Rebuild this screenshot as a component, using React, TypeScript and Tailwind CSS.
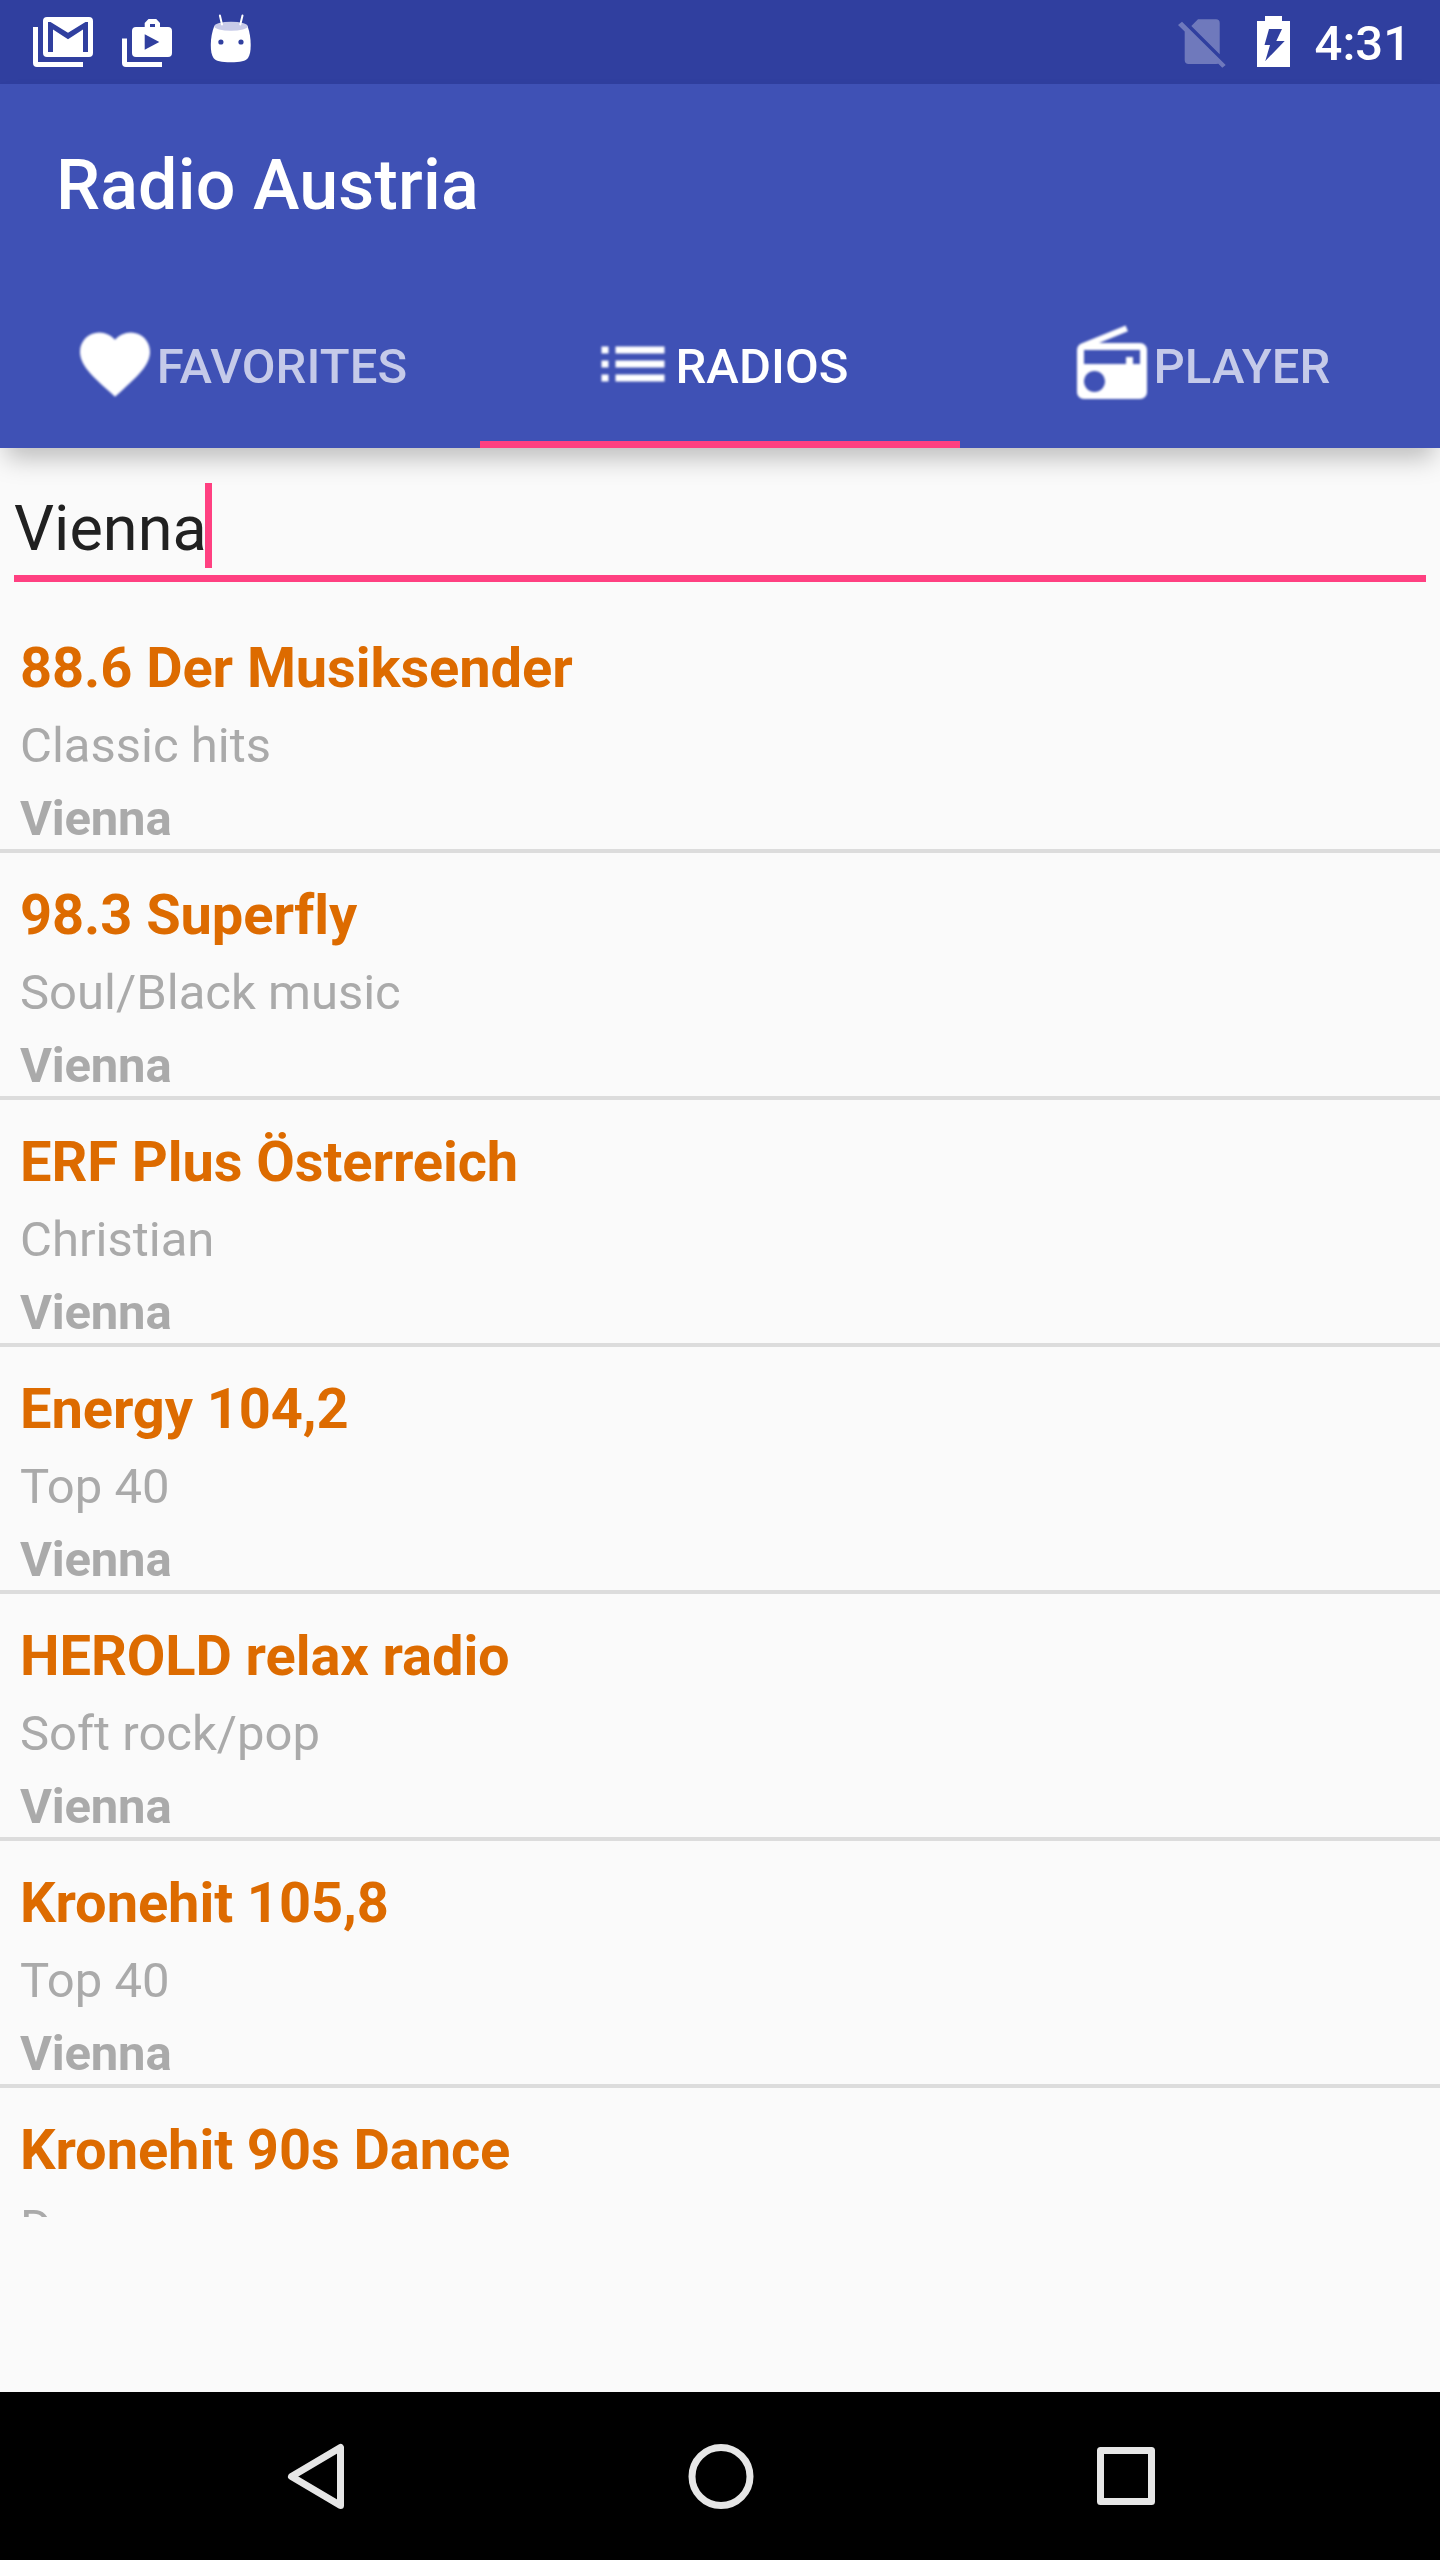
const stations = [
  { name: "88.6 Der Musiksender", genre: "Classic hits", city: "Vienna" },
  { name: "98.3 Superfly", genre: "Soul/Black music", city: "Vienna" },
  { name: "ERF Plus Österreich", genre: "Christian", city: "Vienna" },
  { name: "Energy 104,2", genre: "Top 40", city: "Vienna" },
  { name: "HEROLD relax radio", genre: "Soft rock/pop", city: "Vienna" },
  { name: "Kronehit 105,8", genre: "Top 40", city: "Vienna" },
  { name: "Kronehit 90s Dance", genre: "Dance", city: "" },
];

const tabs = [
  {
    label: "FAVORITES",
    active: false,
    path: "M12 21.35l-1.45-1.32C5.4 15.36 2 12.28 2 8.5 2 5.42 4.42 3 7.5 3c1.74 0 3.41.81 4.5 2.09C13.09 3.81 14.76 3 16.5 3 19.58 3 22 5.42 22 8.5c0 3.78-3.4 6.86-8.55 11.54L12 21.35z",
  },
  {
    label: "RADIOS",
    active: true,
    path: "M3 13h2v-2H3v2zm0 4h2v-2H3v2zm0-8h2V7H3v2zm4 4h14v-2H7v2zm0 4h14v-2H7v2zM7 7v2h14V7H7z",
  },
  {
    label: "PLAYER",
    active: false,
    path: "M3.24 6.15C2.51 6.43 2 7.17 2 8v12c0 1.1.89 2 2 2h16c1.11 0 2-.9 2-2V8c0-1.11-.89-2-2-2H8.3l8.26-3.34L15.88 1 3.24 6.15zM7 20c-1.66 0-3-1.34-3-3s1.34-3 3-3 3 1.34 3 3-1.34 3-3 3zm13-8h-2v-2h-2v2H4V8h16v4z",
  },
];

function StatusBar() {
  return (
    <div className="flex h-[84px] items-start bg-[#303f9f] pl-[33px] pr-[29px] text-white">
      <svg className="mt-[17px] h-[50px] w-[60px]" viewBox="0 0 60 50" fill="currentColor">
        <path d="M0 10h5v35h45v5H4a4 4 0 0 1-4-4z" />
        <path
          fillRule="evenodd"
          d="M14 0h42a4 4 0 0 1 4 4v32a4 4 0 0 1-4 4H14a4 4 0 0 1-4-4V4a4 4 0 0 1 4-4zM15 5v30h5V12.500L35 22.300 50 12.500V35h5V5h-2.500L35 15.800 17.500 5z"
        />
      </svg>
      <svg className="ml-[29px] mt-[19px] h-[48px] w-[50px]" viewBox="0 0 50 48" fill="currentColor">
        <path d="M0 19.500h5V43h35v5H4a4 4 0 0 1-4-4z" />
        <path
          fillRule="evenodd"
          d="M14 8h8.700V4L26.500 0h7.700L38 4v4h8a4 4 0 0 1 4 4v22a4 4 0 0 1-4 4H14a4 4 0 0 1-4-4V12a4 4 0 0 1 4-4zM28 5v3h5V5zM22.700 15.300v15.400L37.300 23z"
        />
      </svg>
      <svg className="ml-[38px] mt-[14px] h-[49px] w-[42px]" viewBox="0 0 42 49" fill="currentColor">
        <path d="M4.300 12C2 18 .8 24 .8 31c0 6 .8 10 2.700 13 2 3 8 4.200 17.300 4.200S36 47 38 44c1.900-3 2.700-7 2.700-13 0-7-1-13-3.200-19z" />
        <ellipse cx="21" cy="12.300" rx="16.700" ry="4.500" fill="#c8cbe8" />
        <path d="M9.900 1.500 12 10.500M32.500 1.500 30.300 10.500" stroke="currentColor" strokeWidth="2" strokeLinecap="round" />
        <circle cx="10.900" cy="28" r="2.600" fill="#303f9f" />
        <circle cx="31" cy="28" r="2.600" fill="#303f9f" />
      </svg>
      <svg className="ml-auto mt-[19px] h-[49px] w-[48px] opacity-30" viewBox="0 0 48 49" fill="currentColor">
        <path d="M20 .3h18a3.700 3.700 0 0 1 3.700 3.700v31.200L13.300 7z" />
        <path d="M0 6 4 2.700 47.700 46 44.300 48.700 40.300 44.800 38 45H10.700a4 4 0 0 1-4-4V12.500z" />
      </svg>
      <svg className="ml-[31px] mt-[16px] h-[51px] w-[33px]" viewBox="0 0 33 51" fill="currentColor">
        <path fillRule="evenodd" d="M8 0h17v5h8v46H0V5h8zM12 13 7.500 29H13L8.300 45 27.700 25H19.300L25 13z" />
      </svg>
      <span className="ml-[25px] mt-[14px] text-[49px] font-medium leading-[60px]">4:31</span>
    </div>
  );
}

function AppBar() {
  return (
    <header className="relative z-10 flex h-[364px] flex-col bg-[#3f51b5] shadow-[0_16px_24px_-6px_rgba(0,0,0,0.25)]">
      <div className="flex h-[196px] items-center pl-[56px] pt-[5px]">
        <h1 className="text-[70px] font-medium leading-[82px] tracking-[0.15px] text-white">Radio Austria</h1>
      </div>
      <nav className="grid h-[168px] grid-cols-3">
        {tabs.map((tab) => (
          <div
            key={tab.label}
            className={
              tab.active
                ? "flex items-center justify-center border-b-[7px] border-[#ff4081] pt-[6px] text-white"
                : "flex items-center justify-center border-b-[7px] border-transparent pt-[6px] text-[#c5cae9]"
            }
          >
            <svg className="size-[84px] shrink-0 fill-white blur-[1px]" viewBox="0 0 24 24">
              <path d={tab.path} />
            </svg>
            <span className="pt-[6px] text-[49px] font-medium leading-[58px] tracking-[0.1px]">{tab.label}</span>
          </div>
        ))}
      </nav>
    </header>
  );
}

export default function App() {
  return (
    <div className="flex h-[2560px] w-[1440px] flex-col overflow-hidden bg-[#fafafa] font-[Roboto,sans-serif]">
      <StatusBar />
      <AppBar />

      <div className="mx-[14px] mt-[35px] flex h-[99px] items-start border-b-[7px] border-[#ff4081]">
        <span className="text-[63px] leading-[91px] text-[#212121]">Vienna</span>
        <span className="-ml-[2px] h-[85px] w-[7px] bg-[#ff4081]" />
      </div>

      <ul className="mt-[24px] h-[1611px] overflow-hidden">
        {stations.map((s) => (
          <li key={s.name} className="h-[247px] border-b-4 border-[#dcdcdc] pl-[20px] pt-[25px]">
            <div className="text-[56px] font-bold leading-[75px] tracking-[-0.08px] text-[#dd6b00]">{s.name}</div>
            <div className="mt-[7px] text-[49px] leading-[66px] text-[#aaaaaa]">{s.genre}</div>
            <div className="mt-[9px] text-[49px] font-bold leading-[62px] tracking-[-0.2px] text-[#aaaaaa]">{s.city}</div>
          </li>
        ))}
      </ul>

      <footer className="mt-auto flex h-[168px] items-center justify-center gap-[337px] bg-black pl-px">
        <svg className="size-[68px]" viewBox="0 0 68 68" fill="none" stroke="#e6e6e6" strokeWidth="7" strokeLinejoin="round">
          <path d="M58.500 5.500v58L9.500 34.500z" />
        </svg>
        <svg className="size-[68px]" viewBox="0 0 68 68" fill="none" stroke="#e6e6e6" strokeWidth="7">
          <circle cx="34" cy="34.500" r="29" />
        </svg>
        <svg className="size-[68px]" viewBox="0 0 68 68" fill="none" stroke="#e6e6e6" strokeWidth="7" strokeLinejoin="round">
          <path d="M8.500 8.500h51v51h-51z" />
        </svg>
      </footer>
    </div>
  );
}
